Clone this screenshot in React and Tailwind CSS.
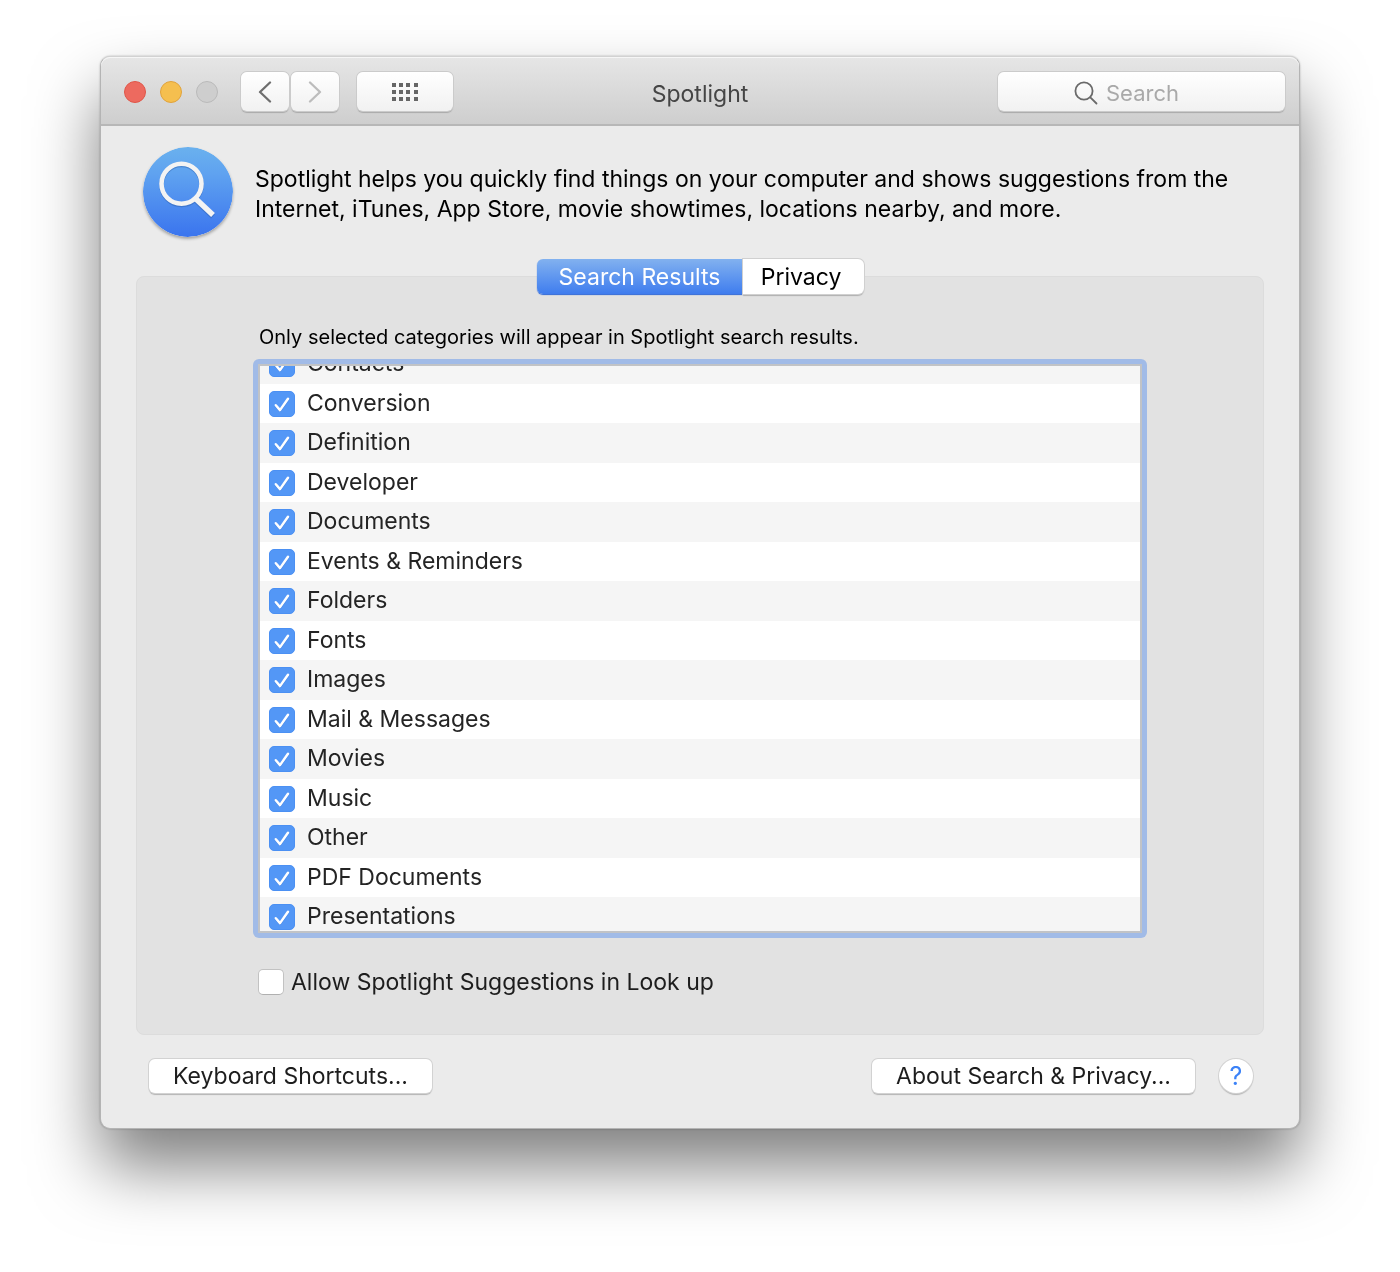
import React, { useState, useEffect, useRef } from 'react';

const CATEGORIES = [
  'Contacts',
  'Conversion',
  'Definition',
  'Developer',
  'Documents',
  'Events & Reminders',
  'Folders',
  'Fonts',
  'Images',
  'Mail & Messages',
  'Movies',
  'Music',
  'Other',
  'PDF Documents',
  'Presentations',
];

const Checkbox = ({ id, checked, onChange }) => (
  <span className="grid size-[26px] shrink-0">
    <input
      id={id}
      type="checkbox"
      checked={checked}
      onChange={onChange}
      className="[grid-area:1/1] size-[26px] appearance-none rounded-[5px] border border-[#c2c2c2] border-b-[#b0b0b0] bg-white checked:border-[#4b90f3] checked:bg-[#5397f6]"
    />
    {checked && (
      <svg viewBox="0 0 26 26" className="pointer-events-none [grid-area:1/1] size-[26px]" fill="none">
        <path d="M6.8 14.9l4.2 4.9L19 8.6" stroke="#2f6fd0" strokeOpacity="0.5" strokeWidth="2.4" strokeLinecap="round" strokeLinejoin="round" />
        <path d="M6.8 14.2l4.2 4.9L19 7.8" stroke="#fff" strokeWidth="2.5" strokeLinecap="round" strokeLinejoin="round" />
      </svg>
    )}
  </span>
);

const ToolbarButton = ({ label, className, children }) => (
  <button
    type="button"
    aria-label={label}
    className={`flex h-[39px] items-center justify-center rounded-md bg-linear-to-b from-white to-[#f1f1f1] shadow-[0_0_0_1px_#cbcbcb,0_2px_1px_#a9a9a9] ${className}`}
  >
    {children}
  </button>
);

const PushButton = ({ children }) => (
  <button
    type="button"
    className="h-[34px] rounded-md bg-white px-6 text-[23px] leading-7 text-[#1d1d1d] shadow-[0_0_0_1px_#d2d2d2,0_2px_1px_#b4b4b4]"
  >
    {children}
  </button>
);

const TitleBar = () => (
  <header className="grid grid-cols-[1fr_auto_1fr] items-center rounded-t-[9px] border-b-2 border-[#b7b7b7] bg-linear-to-b from-[#e6e6e6] to-[#cecece] px-[14px] pt-[15px] pb-[13px] shadow-[inset_0_1px_0_#f6f6f6]">
    <div className="flex items-center pl-[9px]">
      <div className="flex gap-[14px]">
        <button type="button" aria-label="Close" className="size-[22px] rounded-full border border-[#df5548] bg-[#ed6a5f]"></button>
        <button type="button" aria-label="Minimize" className="size-[22px] rounded-full border border-[#e0a23a] bg-[#f5bf4f]"></button>
        <button type="button" aria-label="Zoom" className="size-[22px] rounded-full border border-[#b9b9b9] bg-[#cecece]"></button>
      </div>
      <div className="ml-[23px] flex gap-[2px]">
        <ToolbarButton label="Back" className="w-12">
          <svg viewBox="0 0 14 22" className="h-[22px] w-[14px]" fill="none" stroke="#6e6e6e" strokeWidth="2.3" strokeLinecap="round" strokeLinejoin="round">
            <path d="M12 1.5L2 11l10 9.5" />
          </svg>
        </ToolbarButton>
        <ToolbarButton label="Forward" className="w-12">
          <svg viewBox="0 0 14 22" className="h-[22px] w-[14px]" fill="none" stroke="#bcbcbc" strokeWidth="2.3" strokeLinecap="round" strokeLinejoin="round">
            <path d="M2 1.5L12 11 2 20.5" />
          </svg>
        </ToolbarButton>
      </div>
      <ToolbarButton label="Show All" className="ml-[18px] w-24">
        <svg viewBox="0 0 26 18" className="h-[18px] w-[26px]" fill="#666">
          {[0, 7, 14].map((y) =>
            [0, 7, 14, 22].map((x) => <rect key={`${x}-${y}`} x={x} y={y} width="4" height="4" />)
          )}
        </svg>
      </ToolbarButton>
    </div>
    <h1 className="pt-1 text-[23px] leading-7 text-[#454545]">Spotlight</h1>
    <label className="flex h-[39px] w-[287px] items-center gap-2 justify-self-end rounded-md bg-linear-to-b from-white to-[#f1f1f1] pt-[2px] pl-[76px] shadow-[0_0_0_1px_#cbcbcb,0_2px_1px_#a9a9a9]">
      <svg viewBox="0 0 24 24" className="size-6 shrink-0" fill="none" stroke="#6a6a6a" strokeWidth="1.8" strokeLinecap="round">
        <circle cx="10" cy="10" r="8.6" />
        <path d="M16.3 16.3L22.5 22.5" />
      </svg>
      <input
        type="text"
        placeholder="Search"
        aria-label="Search"
        className="w-full min-w-0 bg-transparent text-[22px] leading-7 outline-none placeholder:text-[#a9a9a9]"
      />
    </label>
  </header>
);

const SpotlightIcon = () => (
  <svg viewBox="0 0 90 90" className="size-[90px] shrink-0 rounded-full shadow-[0_2px_3px_rgba(0,0,0,0.3)]" fill="none">
    <defs>
      <linearGradient id="spotlight-bg" x1="0" y1="0" x2="0" y2="1">
        <stop offset="0" stopColor="#6ab1ee" />
        <stop offset="0.3" stopColor="#5fa2f0" />
        <stop offset="1" stopColor="#3a74ee" />
      </linearGradient>
    </defs>
    <circle cx="45" cy="45" r="45" fill="url(#spotlight-bg)" />
    <g stroke="#2c5fae" strokeOpacity="0.45">
      <circle cx="38.5" cy="38" r="20" strokeWidth="4.6" />
      <path d="M53.5 54L70 69.5" strokeWidth="5.5" />
    </g>
    <g stroke="#f3f3f3">
      <circle cx="38.5" cy="36.8" r="20" strokeWidth="4.6" />
      <path d="M53 52L70 68" strokeWidth="5.5" />
    </g>
  </svg>
);

const App = () => {
  const [selected, setSelected] = useState(CATEGORIES);
  const [allowLookup, setAllowLookup] = useState(false);
  const [tab, setTab] = useState('results');
  const listRef = useRef(null);

  // The list opens a little scrolled down
  useEffect(() => {
    listRef.current.scrollTop = 22;
  }, []);

  const toggle = (name) => {
    setSelected((prev) => (prev.includes(name) ? prev.filter((n) => n !== name) : [...prev, name]));
  };

  const activeTab = 'bg-linear-to-b from-[#82b1ef] to-[#3f7cee] text-white shadow-[0_1px_1px_#2f68d8]';
  const idleTab = 'bg-white text-black shadow-[0_0_0_1px_#d0d0d0,0_2px_1px_#b0b0b0]';

  return (
    <div className="min-h-screen bg-white px-[100px] pt-14 pb-[143px] font-[Inter,'Liberation_Sans',sans-serif]">
      <main className="rounded-[10px] border border-[#b4b4b4] border-t-[#d2d2d2] bg-[#ebebeb] pb-[35px] shadow-[0_0_2px_rgba(0,0,0,0.3),0_38px_66px_rgba(0,0,0,0.5)]">
        <TitleBar />

        <section className="flex items-center gap-[22px] px-[42px] pt-[21px]">
          <SpotlightIcon />
          <p className="pt-1 text-[23px] leading-[30px] text-black">
            Spotlight helps you quickly find things on your computer and shows suggestions from the
            Internet, iTunes, App Store, movie showtimes, locations nearby, and more.
          </p>
        </section>

        <div className="mt-[22px] px-[35px]">
          <div role="tablist" className="relative z-10 -mb-[18px] flex justify-center text-[23px] leading-7">
            <button
              type="button"
              role="tab"
              aria-selected={tab === 'results'}
              onClick={() => setTab('results')}
              className={`h-[35px] w-[206px] rounded-l-md ${tab === 'results' ? activeTab : idleTab}`}
            >
              Search Results
            </button>
            <button
              type="button"
              role="tab"
              aria-selected={tab === 'privacy'}
              onClick={() => setTab('privacy')}
              className={`h-[35px] w-[121px] rounded-r-md pr-1 ${tab === 'privacy' ? activeTab : idleTab}`}
            >
              Privacy
            </button>
          </div>

          <section className="rounded-lg border border-[#dcdcdc] bg-[#e2e2e2] px-[116px] pt-[46px] pb-[38px]">
            <h2 className="pl-[6px] text-[20px] leading-7 text-black">
              Only selected categories will appear in Spotlight search results.
            </h2>
            <div className="mt-2 rounded-md bg-[#a1bbe7] p-[5px]">
              <ul
                ref={listRef}
                className="h-[569px] overflow-y-auto border-2 border-[#c1c3c6] bg-white [scrollbar-width:none]"
              >
                {CATEGORIES.map((name) => (
                  <li key={name} className="flex h-10 items-center bg-[#f5f5f5] pl-[9px] even:h-[39px] even:bg-white">
                    <Checkbox id={name} checked={selected.includes(name)} onChange={() => toggle(name)} />
                    <label htmlFor={name} className="pb-[2px] pl-3 text-[23px] leading-7 text-[#242424]">
                      {name}
                    </label>
                  </li>
                ))}
              </ul>
            </div>
            <div className="mt-[30px] flex items-center gap-[7px] pl-[5px]">
              <Checkbox id="lookup" checked={allowLookup} onChange={(e) => setAllowLookup(e.target.checked)} />
              <label htmlFor="lookup" className="text-[23px] leading-7 text-[#1d1d1d]">
                Allow Spotlight Suggestions in Look up
              </label>
            </div>
          </section>
        </div>

        <footer className="mt-6 flex items-center justify-between pr-[46px] pl-12">
          <PushButton>Keyboard Shortcuts...</PushButton>
          <div className="flex items-center gap-6">
            <PushButton>About Search &amp; Privacy...</PushButton>
            <button
              type="button"
              aria-label="Help"
              className="size-[34px] rounded-full bg-white text-[25px] leading-7 text-[#3b82f7] shadow-[0_0_0_1px_#d2d2d2,0_2px_1px_#b4b4b4]"
            >
              ?
            </button>
          </div>
        </footer>
      </main>
    </div>
  );
};

export default App;
